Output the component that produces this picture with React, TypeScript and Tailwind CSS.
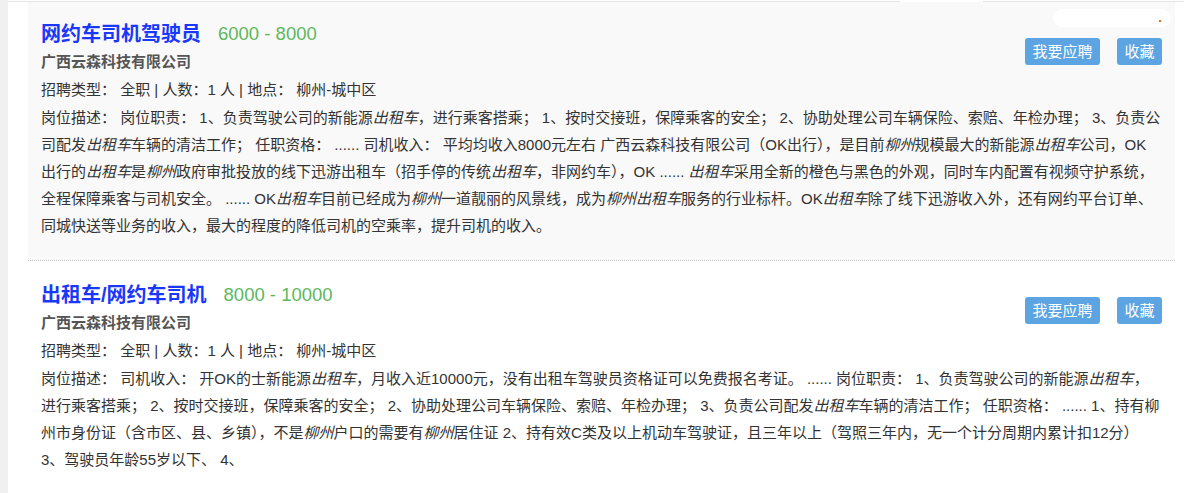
import React from "react";

const I = ({ children }: { children: React.ReactNode }) => <em className="italic">{children}</em>;

const L = ({ children }: { children: React.ReactNode }) => (
  <div className="whitespace-nowrap">{children}</div>
);

function Item({
  first,
  title,
  salary,
  desc,
}: {
  first: boolean;
  title: string;
  salary: string;
  desc: React.ReactNode;
}) {
  return (
    <div
      className={
        first
          ? "relative bg-[#f9f9f9] pl-[13px] pr-[10px] pt-[18px] pb-[21px] border-b border-dotted border-[#c8c8c8]"
          : "relative bg-white pl-[13px] pr-[10px] pt-[20px] pb-[21px]"
      }
    >
      <div className="flex items-start justify-between">
        <div>
          <div className="flex items-center h-[28px]">
            <span className="text-[20px] font-bold text-[#1a38fa] leading-[28px]">{title}</span>
            <span className="ml-[17px] text-[18.5px] text-[#5cb85c] leading-[28px]">{salary}</span>
          </div>
          <div className="h-[28px] leading-[28px] text-[15px] font-bold text-[#555]">广西云森科技有限公司</div>
          <div className="h-[28px] leading-[28px] text-[15px] text-[#333]">
            招聘类型： 全职 | 人数：1 人 | 地点： 柳州-城中区
          </div>
        </div>
        <div className={first ? "flex items-center gap-[17px] mt-[18px] mr-[3px]" : "flex items-center gap-[17px] mt-[16px] mr-[3px]"}>
          <button className="w-[75px] h-[27px] rounded-[3px] bg-[#5da5e2] text-white text-[15px] leading-[27px]">我要应聘</button>
          <button className="w-[45px] h-[27px] rounded-[3px] bg-[#5da5e2] text-white text-[15px] leading-[27px]">收藏</button>
        </div>
      </div>
      <div className="text-[15px] leading-[27px] text-[#333]">{desc}</div>
    </div>
  );
}

export default function App() {
  const desc1 = (
    <>
      <L>岗位描述： 岗位职责： 1、负责驾驶公司的新能源<I>出租车</I>，进行乘客搭乘； 1、按时交接班，保障乘客的安全； 2、协助处理公司车辆保险、索赔、年检办理； 3、负责公</L>
      <L>司配发<I>出租车</I>车辆的清洁工作； 任职资格： ...... 司机收入： 平均均收入8000元左右 广西云森科技有限公司（OK出行），是目前<I>柳州</I>规模最大的新能源<I>出租车</I>公司，OK</L>
      <L>出行的<I>出租车</I>是<I>柳州</I>政府审批投放的线下迅游出租车（招手停的传统<I>出租车</I>，非网约车），OK ...... <I>出租车</I>采用全新的橙色与黑色的外观，同时车内配置有视频守护系统，</L>
      <L>全程保障乘客与司机安全。 ...... OK<I>出租车</I>目前已经成为<I>柳州</I>一道靓丽的风景线，成为<I>柳州出租车</I>服务的行业标杆。OK<I>出租车</I>除了线下迅游收入外，还有网约平台订单、</L>
      <L>同城快送等业务的收入，最大的程度的降低司机的空乘率，提升司机的收入。</L>
    </>
  );
  const desc2 = (
    <>
      <L>岗位描述： 司机收入： 开OK的士新能源<I>出租车</I>，月收入近10000元，没有出租车驾驶员资格证可以免费报名考证。 ...... 岗位职责： 1、负责驾驶公司的新能源<I>出租车</I>，</L>
      <L>进行乘客搭乘； 2、按时交接班，保障乘客的安全； 2、协助处理公司车辆保险、索赔、年检办理； 3、负责公司配发<I>出租车</I>车辆的清洁工作； 任职资格： ...... 1、持有柳</L>
      <L>州市身份证（含市区、县、乡镇），不是<I>柳州</I>户口的需要有<I>柳州</I>居住证 2、持有效C类及以上机动车驾驶证，且三年以上（驾照三年内，无一个计分周期内累计扣12分）</L>
      <L>3、驾驶员年龄55岁以下、 4、</L>
    </>
  );
  return (
    <div
      className="flex h-[493px] w-[1184px] overflow-hidden bg-white"
      style={{ fontFamily: '"Liberation Sans", "Noto Sans CJK SC", sans-serif' }}
    >
      <div className="w-[8px] shrink-0 bg-[#f0f0f0]" />
      <div className="relative flex-1 pt-[1px]">
        <div className="border-t border-[#e4e4e4]" />
        <div className="absolute left-[892px] top-[1px] h-[1px] w-[83px] bg-white" />
        <div className="pl-[20px] pr-[9px]">
          <Item first title="网约车司机驾驶员" salary="6000 - 8000" desc={desc1} />
          <Item first={false} title="出租车/网约车司机" salary="8000 - 10000" desc={desc2} />
        </div>
        <div className="absolute left-[1045px] top-[9px] h-[18px] w-[118px] rounded-full bg-white">
          <div className="absolute right-[10px] top-[11px] h-[2px] w-[2px] bg-[#e07020]" />
        </div>
      </div>
    </div>
  );
}
